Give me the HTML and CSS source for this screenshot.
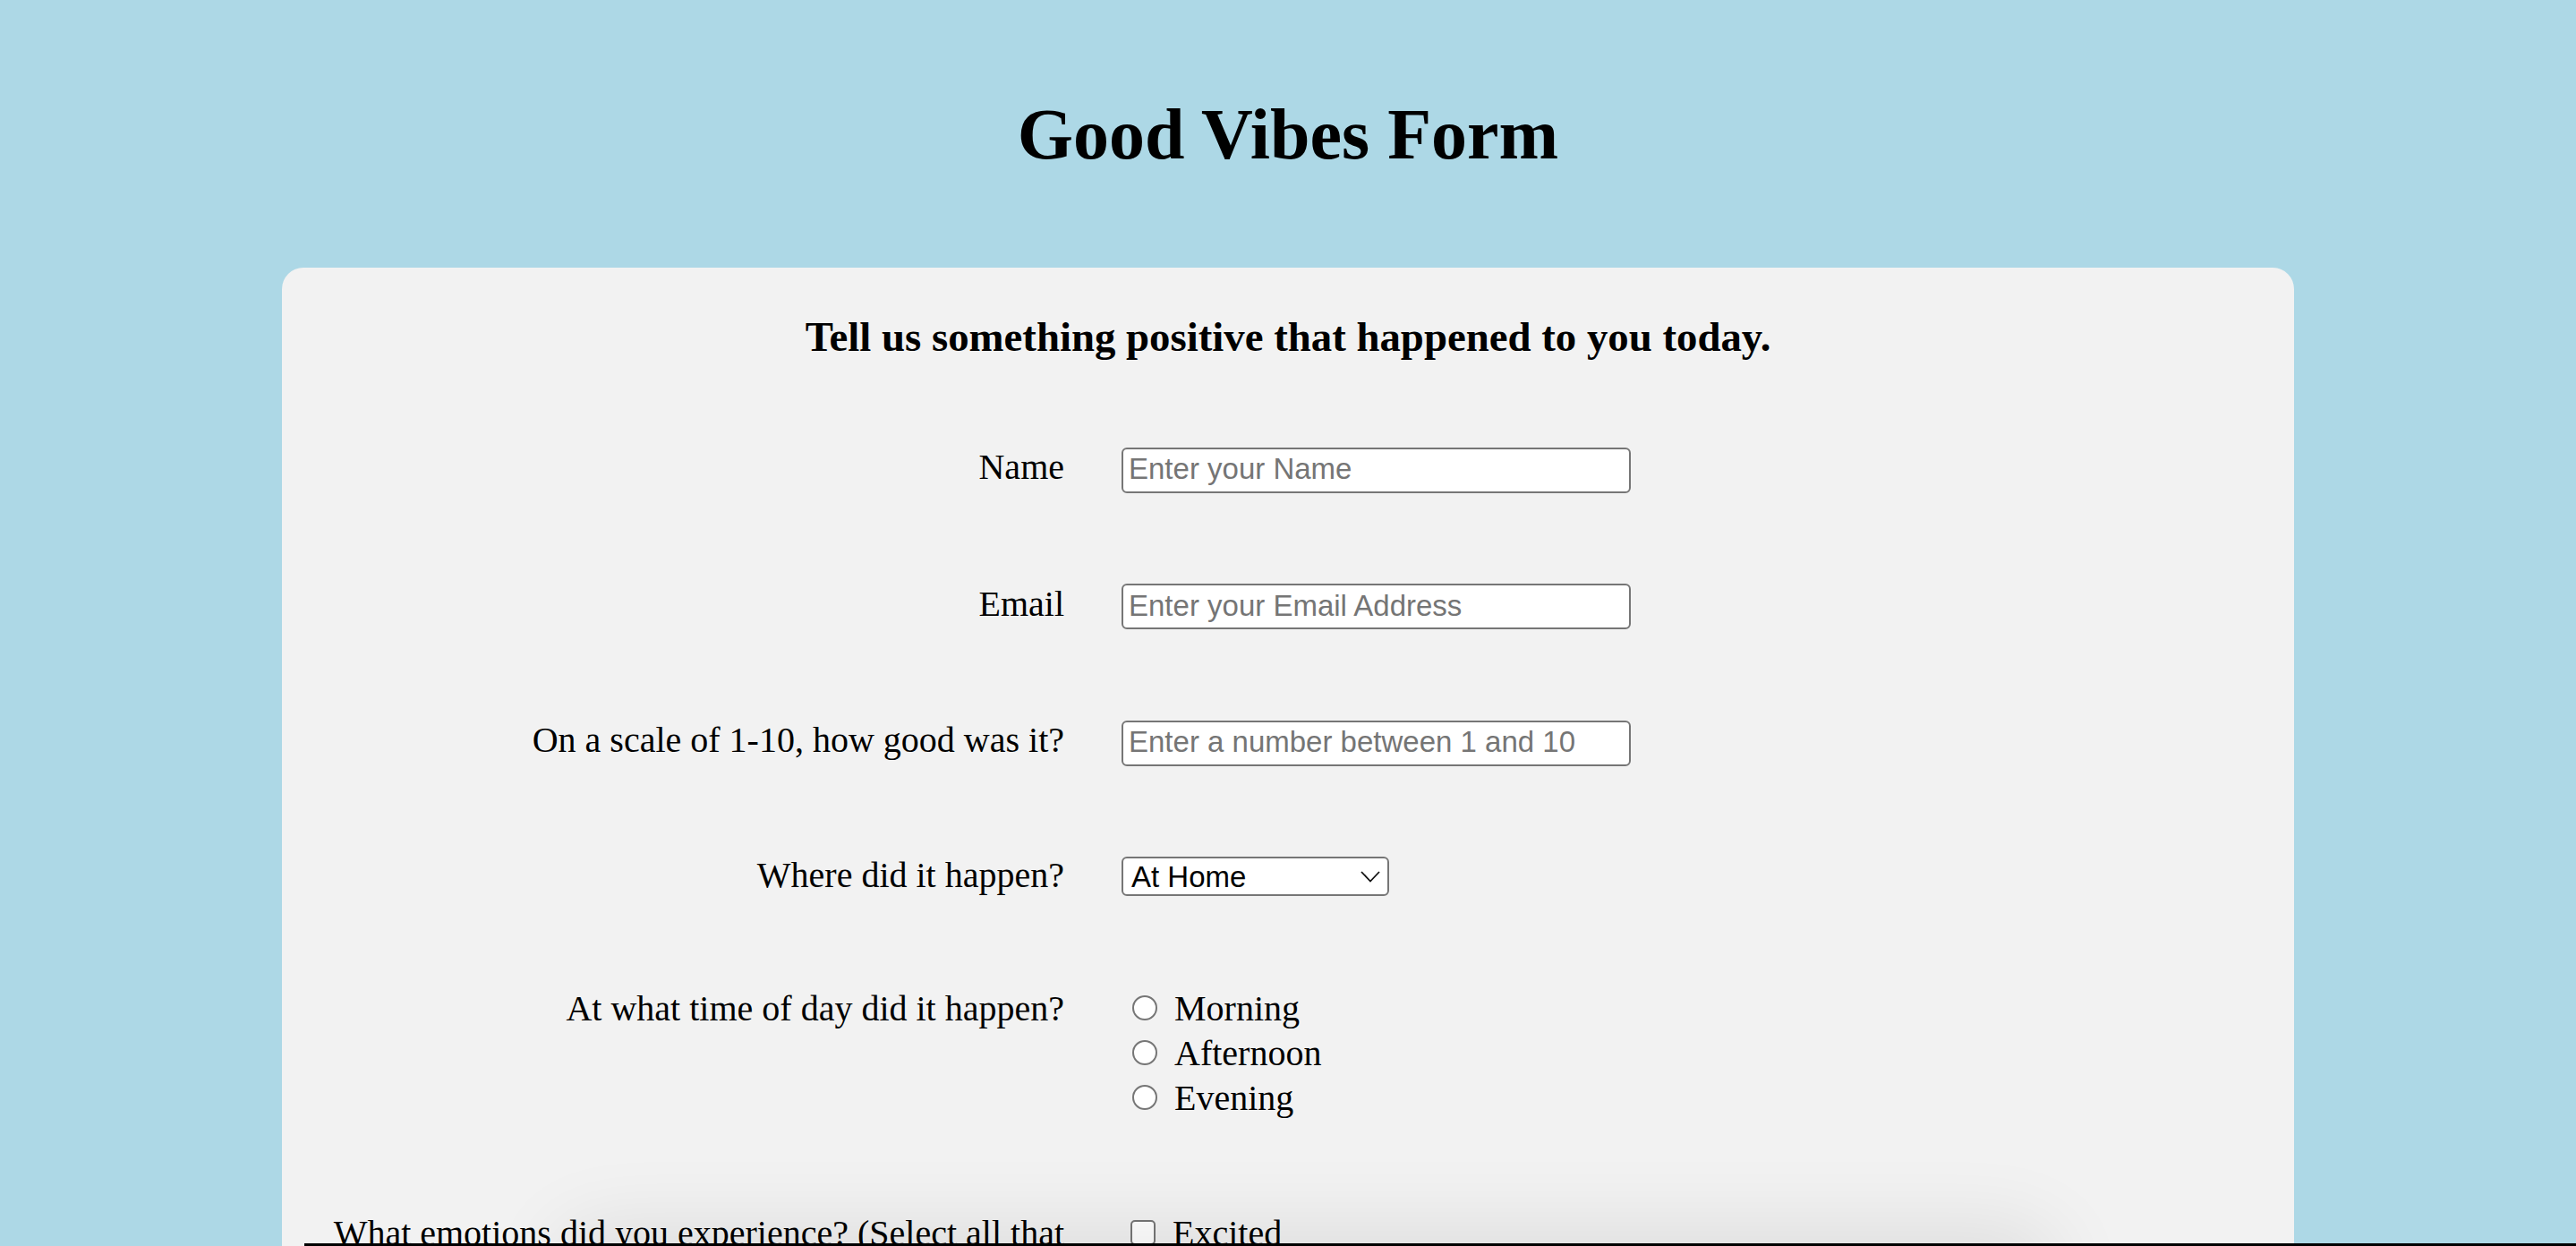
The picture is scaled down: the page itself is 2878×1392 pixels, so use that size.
FILE: index.html
```html
<!DOCTYPE html>
<html lang="en">
<head>
<meta charset="utf-8">
<title>Good Vibes Form</title>
<link rel="stylesheet" href="styles.css">
</head>
<body>
<h1 class="title">Good Vibes Form</h1>
<form class="card">
  <h2 class="subtitle">Tell us something positive that happened to you today.</h2>

  <div class="row row-name">
    <label class="label" for="name">Name</label>
    <div class="control"><input class="text-input" id="name" type="text" placeholder="Enter your Name"></div>
  </div>

  <div class="row row-email">
    <label class="label" for="email">Email</label>
    <div class="control"><input class="text-input" id="email" type="email" placeholder="Enter your Email Address"></div>
  </div>

  <div class="row row-number">
    <label class="label" for="rating">On a scale of 1-10, how good was it?</label>
    <div class="control"><input class="text-input" id="rating" type="text" placeholder="Enter a number between 1 and 10"></div>
  </div>

  <div class="row row-select">
    <label class="label" for="where">Where did it happen?</label>
    <div class="control">
      <span class="select-wrap">
        <select class="select" id="where">
          <option>At Home</option>
          <option>At Work</option>
          <option>At School</option>
          <option>Outdoors</option>
        </select>
        <svg class="chevron" width="22" height="13" viewBox="0 0 22 13"><path d="M1 1 L11 11.5 L21 1" fill="none" stroke="#111" stroke-width="1.8"/></svg>
      </span>
    </div>
  </div>

  <div class="row row-radio">
    <div class="label">At what time of day did it happen?</div>
    <div class="control options">
      <label class="option"><input class="radio" type="radio" name="time">Morning</label>
      <label class="option"><input class="radio" type="radio" name="time">Afternoon</label>
      <label class="option"><input class="radio" type="radio" name="time">Evening</label>
    </div>
  </div>

  <div class="row row-check">
    <div class="label">What emotions did you experience? (Select all that apply)</div>
    <div class="control options">
      <label class="option"><input class="check" type="checkbox">Excited</label>
      <label class="option"><input class="check" type="checkbox">Happy</label>
      <label class="option"><input class="check" type="checkbox">Grateful</label>
      <label class="option"><input class="check" type="checkbox">Relaxed</label>
    </div>
  </div>
</form>
<div class="dock-shadow"></div>
<div class="bottom-edge"></div>
</body>
</html>
```
FILE: styles.css
```css
html, body {
  margin: 0;
  padding: 0;
}
body {
  background: #add8e6;
  font-family: "Liberation Serif", "Times New Roman", serif;
  color: #000;
  overflow: hidden;
}
.title {
  margin: 105px 0 103px;
  font-size: 80px;
  line-height: 91px;
  font-weight: bold;
  text-align: center;
}
.card {
  width: 2248px;
  margin: 0 auto;
  box-sizing: border-box;
  background: #f2f2f2;
  border-radius: 24px;
  padding: 50px 0 200px 24px;
}
.subtitle {
  margin: 0 0 96px;
  font-size: 46.8px;
  line-height: 54px;
  font-weight: bold;
  text-align: center;
  padding-right: 24px;
}
.row {
  display: flex;
  align-items: baseline;
  margin-bottom: 101px;
}
.row-number {
  margin-bottom: 99px;
}
.label {
  flex: 0 0 850px;
  margin-right: 64px;
  text-align: right;
  font-size: 40px;
  line-height: 46px;
}
.control {
  flex: 1 1 auto;
}
.text-input {
  box-sizing: border-box;
  width: 569px;
  height: 51px;
  padding: 0 8px 2px 6px;
  border: 2px solid #767676;
  border-radius: 6px;
  background: #fff;
  font-family: "Liberation Sans", Arial, sans-serif;
  font-size: 33px;
  color: #000;
  outline: none;
}
.text-input::placeholder {
  color: #757575;
}
.select-wrap {
  position: relative;
  display: inline-block;
}
.select {
  -webkit-appearance: none;
  appearance: none;
  box-sizing: border-box;
  width: 299px;
  height: 44px;
  padding: 0 40px 0 9px;
  border: 2px solid #767676;
  border-radius: 6px;
  background: #fff;
  font-family: "Liberation Sans", Arial, sans-serif;
  font-size: 33px;
  color: #000;
  outline: none;
}
.chevron {
  position: absolute;
  right: 10px;
  top: 16px;
  pointer-events: none;
}
.options {
  display: flex;
  flex-direction: column;
}
.option {
  display: block;
  font-size: 40px;
  line-height: 50px;
}
.radio,
.check {
  -webkit-appearance: none;
  appearance: none;
  box-sizing: border-box;
  width: 28px;
  height: 28px;
  margin: 0 19px 0 12px;
  border: 2px solid #767676;
  background: #fff;
  vertical-align: baseline;
}
.radio {
  border-radius: 50%;
}
.check {
  border-radius: 5px;
  margin-left: 10px;
}
.dock-shadow {
  position: fixed;
  left: 640px;
  width: 1640px;
  bottom: -60px;
  height: 60px;
  border-radius: 40px;
  box-shadow: 0 0 90px 20px rgba(0, 0, 0, 0.09);
}
.bottom-edge {
  position: fixed;
  left: 340px;
  right: 0;
  bottom: 0;
  height: 3px;
  background: #000;
}
```
